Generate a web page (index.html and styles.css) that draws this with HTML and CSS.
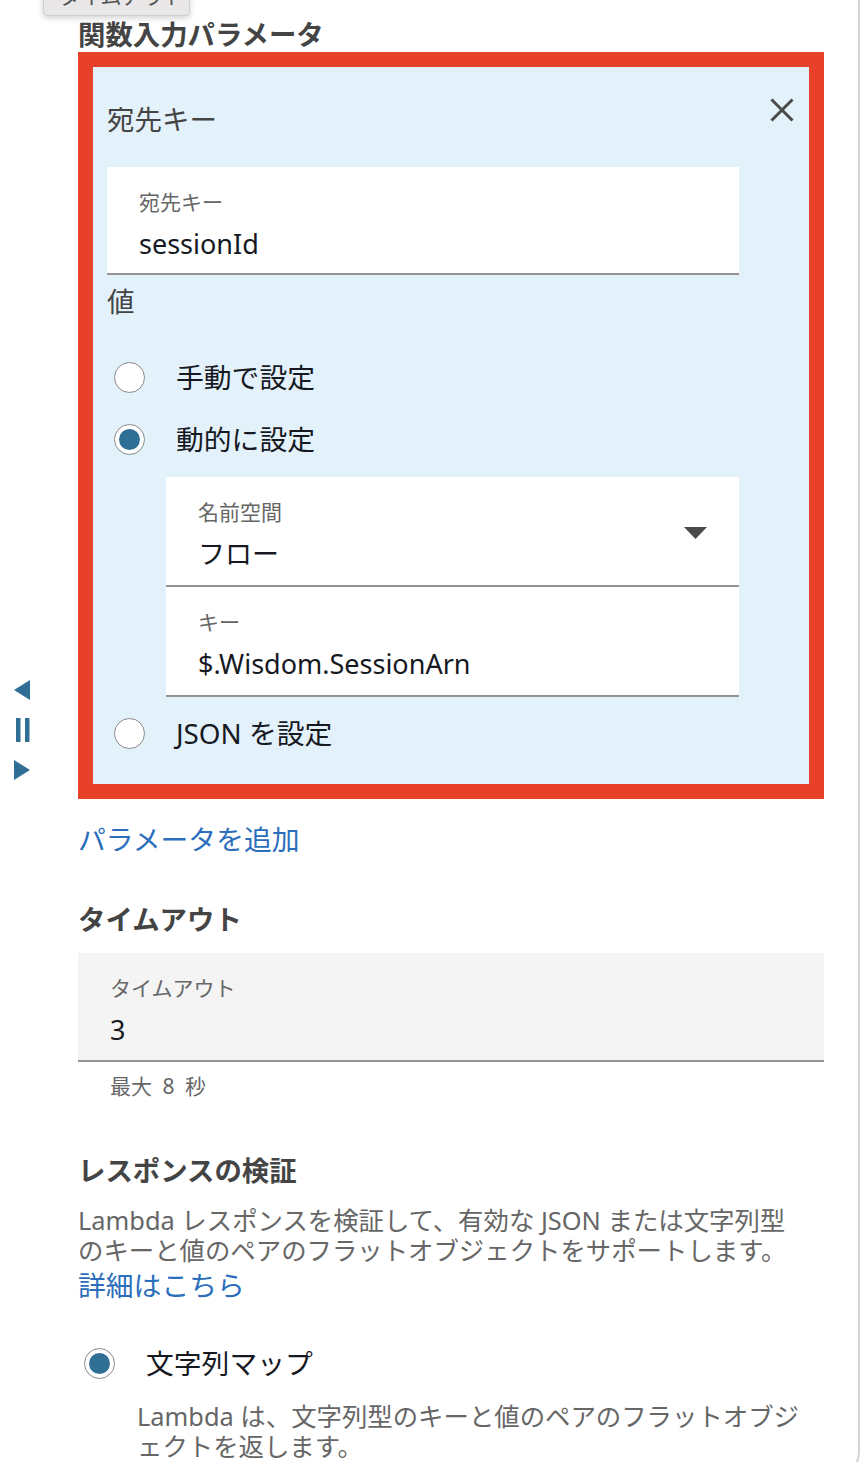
FILE: index.html
```html
<!DOCTYPE html>
<html lang="ja">
<head>
<meta charset="utf-8">
<title>関数入力パラメータ</title>
<link rel="stylesheet" href="styles.css">
</head>
<body>
<div class="panel">
  <div class="tooltip">タイムアウト</div>

  <div class="player">
    <svg class="pl-icon" width="16" height="20" viewBox="0 0 16 20"><path d="M16 0 L16 20 L0 10 Z" fill="#306f95"/></svg>
    <svg class="pl-icon" width="16" height="24" viewBox="0 0 16 24"><rect x="2" y="0" width="4.5" height="24" fill="#306f95"/><rect x="11" y="0" width="4.5" height="24" fill="#306f95"/></svg>
    <svg class="pl-icon" width="16" height="20" viewBox="0 0 16 20"><path d="M0 0 L0 20 L16 10 Z" fill="#306f95"/></svg>
  </div>

  <main class="content">
    <h2 class="section-title first">関数入力パラメータ</h2>

    <section class="param-card">
      <div class="card-head">
        <h3 class="card-title">宛先キー</h3>
        <button class="close-btn" aria-label="閉じる">
          <svg width="24" height="24" viewBox="0 0 24 24"><path d="M1.5 1.5 L22.5 22.5 M22.5 1.5 L1.5 22.5" stroke="#4a4a4a" stroke-width="3" fill="none"/></svg>
        </button>
      </div>

      <div class="field white top-field">
        <div class="field-label">宛先キー</div>
        <div class="field-value">sessionId</div>
      </div>

      <div class="value-label">値</div>

      <div class="radio-row first-radio">
        <span class="radio"></span>
        <span class="radio-text">手動で設定</span>
      </div>
      <div class="radio-row second-radio">
        <span class="radio checked"></span>
        <span class="radio-text">動的に設定</span>
      </div>

      <div class="nested">
        <div class="field white select">
          <div class="field-main">
            <div class="field-label">名前空間</div>
            <div class="field-value">フロー</div>
          </div>
          <svg class="caret" width="23" height="12" viewBox="0 0 23 12"><path d="M0 0 L23 0 L11.5 12 Z" fill="#4a4a4a"/></svg>
        </div>
        <div class="field white">
          <div class="field-label">キー</div>
          <div class="field-value">$.Wisdom.SessionArn</div>
        </div>
      </div>

      <div class="radio-row third-radio">
        <span class="radio"></span>
        <span class="radio-text">JSON を設定</span>
      </div>
    </section>

    <a class="link add-link" href="#">パラメータを追加</a>

    <h2 class="section-title timeout-title">タイムアウト</h2>
    <div class="field grey">
      <div class="field-label">タイムアウト</div>
      <div class="field-value">3</div>
    </div>
    <div class="hint">最大 8 秒</div>

    <h2 class="section-title validate-title">レスポンスの検証</h2>
    <p class="desc">Lambda レスポンスを検証して、有効な JSON または文字列型のキーと値のペアのフラットオブジェクトをサポートします。</p>
    <a class="link more-link" href="#">詳細はこちら</a>

    <div class="radio-row map-radio">
      <span class="radio checked"></span>
      <span class="radio-text">文字列マップ</span>
    </div>
    <p class="desc sub-desc">Lambda は、文字列型のキーと値のペアのフラットオブジェクトを返します。</p>
  </main>
</div>
</body>
</html>
```

FILE: styles.css
```css
* { box-sizing: border-box; }

html, body {
  margin: 0;
  padding: 0;
  background: #ffffff;
  overflow: hidden;
}

body {
  font-family: "Noto Sans", "Noto Sans CJK JP", sans-serif;
  color: #16191f;
}

.panel {
  position: relative;
  width: 860px;
  height: 1478px;
  border-right: 2px solid #d3d3d3;
  border-bottom: 2px solid #d3d3d3;
  border-bottom-right-radius: 26px;
}

.tooltip {
  position: absolute;
  left: 43px;
  top: -18px;
  width: 147px;
  height: 34px;
  padding: 0 0 0 15px;
  background: #e9e7e7;
  border: 1px solid #cfcfcf;
  border-radius: 0 0 4px 4px;
  box-shadow: 0 2px 6px rgba(0,0,0,0.18);
  font-size: 21px;
  line-height: 26px;
  color: #555;
}

.player {
  position: absolute;
  left: 14px;
  top: 680px;
  display: flex;
  flex-direction: column;
  align-items: flex-start;
  gap: 18px;
}
.pl-icon { display: block; }

.content {
  padding: 0 34px 0 78px;
  width: 858px;
}

.section-title {
  margin: 0;
  font-size: 27.4px;
  line-height: 36px;
  font-weight: 700;
  color: #444444;
}
.section-title.first { padding-top: 18px; line-height: 34px; }

.param-card {
  margin-top: 0;
  width: 746px;
  border: 15px solid #e8412a;
  background: #e3f1fb;
  padding: 0 70px 33px 14px;
}

.card-head {
  display: flex;
  justify-content: space-between;
  align-items: flex-start;
  margin-right: -55px;
  padding-top: 31px;
}
.card-title {
  margin: 4px 0 0;
  font-size: 27.5px;
  line-height: 36px;
  font-weight: 400;
  color: #444444;
}
.close-btn {
  border: 0;
  padding: 0;
  background: transparent;
  width: 24px;
  height: 24px;
  display: block;
}
.close-btn svg { display: block; }

.field {
  padding: 22px 32px 13px;
  border-bottom: 2px solid #929292;
}
.field.white { background: #ffffff; }
.field.grey { background: #f4f4f4; margin-top: 15px; padding-bottom: 12px; }
.top-field { margin-top: 29px; padding-bottom: 11px; }

.field-label {
  font-size: 21px;
  line-height: 26px;
  color: #666666;
}
.field-value {
  margin-top: 11px;
  font-size: 27px;
  line-height: 36px;
  color: #16191f;
}

.select {
  display: flex;
  justify-content: space-between;
  align-items: flex-start;
}
.caret { margin-top: 28px; display: block; }

.value-label {
  margin-top: 9px;
  font-size: 27.5px;
  line-height: 36px;
  color: #444444;
}

.radio-row {
  display: flex;
  align-items: center;
  gap: 31px;
  padding-left: 7px;
  height: 36px;
}
.radio {
  width: 31px;
  height: 31px;
  border-radius: 50%;
  border: 1px solid #8a8a8a;
  background: #ffffff;
  flex: none;
  display: flex;
  align-items: center;
  justify-content: center;
}
.radio.checked::after {
  content: "";
  width: 21px;
  height: 21px;
  border-radius: 50%;
  background: #2f6f96;
}
.radio-text {
  font-size: 27.8px;
  line-height: 36px;
  color: #16191f;
}

.first-radio { margin-top: 39px; }
.second-radio { margin-top: 26px; }
.nested { margin: 20px 0 0 59px; }
.third-radio { margin-top: 18px; }

.link {
  display: block;
  color: #2b6ebb;
  text-decoration: none;
  font-size: 27.8px;
  line-height: 36px;
}
.add-link { margin-top: 22px; }

.timeout-title { margin-top: 45px; }

.hint {
  margin-top: 11px;
  padding-left: 32px;
  font-size: 21px;
  line-height: 26px;
  color: #666666;
  word-spacing: 5px;
}

.validate-title { margin-top: 54px; }

.desc {
  margin: 16px 0 0;
  font-size: 25.4px;
  line-height: 30px;
  color: #666666;
  width: 728px;
}
.more-link { margin-top: 2px; }

.map-radio { margin-top: 42px; padding-left: 6px; }
.sub-desc { margin-top: 20px; padding-left: 59px; width: 738px; }
```
